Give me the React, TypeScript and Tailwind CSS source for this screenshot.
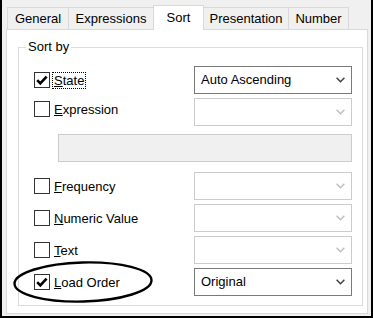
const font = "font-['Liberation_Sans',Arial,sans-serif]";

const tabs = [
  { label: "General", w: "w-[62px]" },
  { label: "Expressions", w: "w-[86px]" },
  { label: "Sort", w: "w-[51px]", active: true },
  { label: "Presentation", w: "w-[86px]" },
  { label: "Number", w: "w-[61px]" },
];

function Chevron({ color }: { color: string }) {
  return (
    <svg width="9" height="6" viewBox="0 0 9 6" className={color}>
      <path d="M0.6 0.8 L4.5 4.7 L8.4 0.8" fill="none" stroke="currentColor" strokeWidth="1.5" />
    </svg>
  );
}

function Check({ checked }: { checked?: boolean }) {
  return (
    <div className="flex h-[16px] w-[16px] shrink-0 items-center justify-center border border-[#333333] bg-white">
      {checked && (
        <svg width="14" height="14" viewBox="0 0 14 14">
          <path d="M2.2 7.2 L5.3 10.3 L11.6 3.6" fill="none" stroke="#000" strokeWidth="2.6" />
        </svg>
      )}
    </div>
  );
}

function Combo({ value, enabled }: { value?: string; enabled?: boolean }) {
  return (
    <div
      className={`flex h-[28px] w-[158px] items-center justify-between border bg-white pl-[6px] pr-[6px] ${
        enabled ? "border-[#7a7a7a]" : "border-[#cccccc]"
      }`}
    >
      <span className="text-[13px] text-black">{value}</span>
      <Chevron color={enabled ? "text-[#404040]" : "text-[#bfbfbf]"} />
    </div>
  );
}

function Row({
  first,
  rest,
  checked,
  focused,
  value,
  enabled,
  className = "",
  leftClass = "",
}: {
  first: string;
  rest: string;
  checked?: boolean;
  focused?: boolean;
  value?: string;
  enabled?: boolean;
  className?: string;
  leftClass?: string;
}) {
  return (
    <div className={`flex items-center justify-between ${className}`}>
      <div className={`flex items-center gap-[2px] ${leftClass}`}>
        <Check checked={checked} />
        <span
          className={`border px-[1px] text-[13px] leading-[15px] text-black ${
            focused ? "border-dotted border-black" : "border-transparent"
          }`}
        >
          <span className="underline underline-offset-[1px]">{first}</span>
          {rest}
        </span>
      </div>
      <Combo value={value} enabled={enabled} />
    </div>
  );
}

export default function App() {
  return (
    <div
      className={`relative flex h-[318px] w-[373px] flex-col overflow-hidden border-b-2 border-l-2 border-r-2 border-black bg-[#f0f0f0] ${font}`}
    >
      <div className="flex h-[29px] items-end pl-[5px]">
        {tabs.map((t, i) => (
          <div
            key={t.label}
            className={`flex items-center justify-center border border-b-0 border-[#d9d9d9] text-[13px] text-black ${t.w} ${
              i > 0 ? "-ml-px" : ""
            } ${t.active ? "relative z-10 -mb-px h-[25px] bg-white" : "h-[22px] bg-[#f0f0f0]"}`}
          >
            {t.label}
          </div>
        ))}
      </div>

      <div className="ml-[4px] mb-[2px] flex w-[362px] flex-1 flex-col border border-[#d9d9d9] bg-white">
        <div className="relative ml-[11px] mt-[17px] h-[259px] w-[345px] border border-[#dcdcdc] pl-[15px] pr-[10px] pt-[18px]">
          <span className="absolute -top-[9px] left-[7px] bg-white px-[2px] text-[13px] leading-[16px] text-black">
            Sort by
          </span>
          <Row first="S" rest="tate" checked focused value="Auto Ascending" enabled />
          <Row first="E" rest="xpression" className="mt-[4px]" leftClass="mb-[6px]" />
          <div className="ml-[24px] mt-[8px] h-[28px] border border-[#cccccc] bg-[#f0f0f0]" />
          <Row first="F" rest="requency" className="mt-[10px]" />
          <Row first="N" rest="umeric Value" className="mt-[4px]" />
          <Row first="T" rest="ext" className="mt-[4px]" />
          <Row first="L" rest="oad Order" checked value="Original" enabled className="mt-[4px]" />
        </div>
      </div>

      <svg
        className="absolute left-[9px] top-[259px]"
        width="146"
        height="46"
        viewBox="0 0 146 46"
      >
        <ellipse
          cx="72"
          cy="23"
          rx="68.5"
          ry="19.5"
          fill="none"
          stroke="#000"
          strokeWidth="2.4"
          transform="rotate(-1.5 72 23)"
        />
      </svg>
    </div>
  );
}
